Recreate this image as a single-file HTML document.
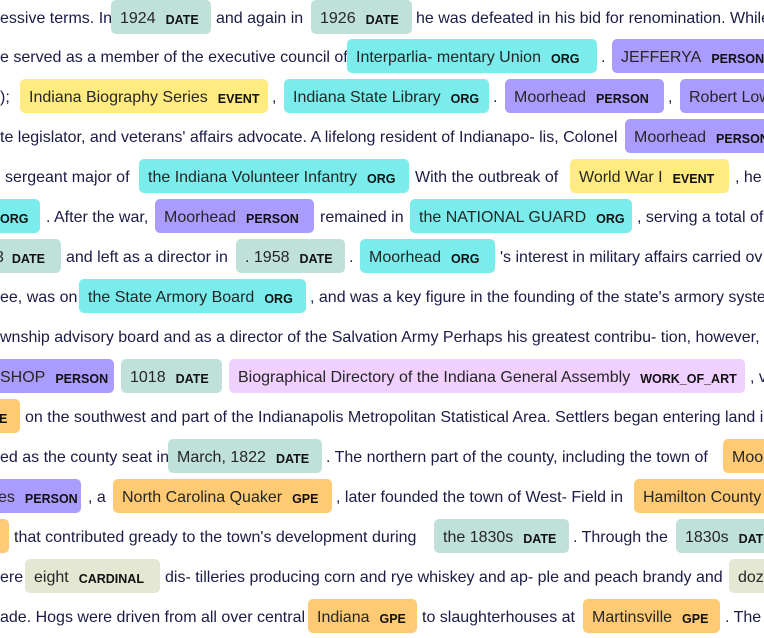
<!DOCTYPE html>
<html><head><meta charset="utf-8"><style>
html,body{margin:0;padding:0;background:#fff;width:764px;height:638px;overflow:hidden}
.r{position:absolute;left:0;width:764px;height:34px}
.r>span{position:absolute;top:0;height:34px;line-height:37px;white-space:nowrap;font-family:"Liberation Sans",sans-serif;font-size:16px;color:#1b1b45}
.e{border-radius:5px;box-sizing:border-box;padding-left:9px;overflow:hidden;color:#262626 !important}
.e b{font-size:12.5px;font-weight:bold;margin-left:10px;color:#111;position:relative;top:1px}
.DATE{background:#bfe1d9}.ORG{background:#7aecec}.PERSON{background:#aa9cfc}.EVENT{background:#ffeb80}
.GPE{background:#feca74}.WOA{background:#f0d0ff}.CARD{background:#e4e7d2}
</style></head><body>
<div class="r" style="top:0">
<span style="left:0">essive terms. In</span>
<span class="e DATE" style="left:111px;width:100px">1924<b>DATE</b></span>
<span style="left:216px">and again in</span>
<span class="e DATE" style="left:311px;width:101px">1926<b>DATE</b></span>
<span style="left:416px">he was defeated in his bid for renomination. While</span>
</div>
<div class="r" style="top:39px">
<span style="left:0">e served as a member of the executive council of</span>
<span class="e ORG" style="left:347px;width:250px">Interparlia- mentary Union<b>ORG</b></span>
<span style="left:601px">.</span>
<span class="e PERSON" style="left:612px;width:160px">JEFFERYA<b>PERSON</b></span>
</div>
<div class="r" style="top:79px">
<span style="left:0">);</span>
<span class="e EVENT" style="left:20px;width:248px">Indiana Biography Series<b>EVENT</b></span>
<span style="left:272px">,</span>
<span class="e ORG" style="left:284px;width:205px">Indiana State Library<b>ORG</b></span>
<span style="left:493px">.</span>
<span class="e PERSON" style="left:505px;width:159px">Moorhead<b>PERSON</b></span>
<span style="left:668px">,</span>
<span class="e PERSON" style="left:680px;width:100px">Robert Low</span>
</div>
<div class="r" style="top:119px">
<span style="left:0">te legislator, and veterans' affairs advocate. A lifelong resident of Indianapo- lis, Colonel</span>
<span class="e PERSON" style="left:625px;width:160px">Moorhead<b>PERSON</b></span>
</div>
<div class="r" style="top:159px">
<span style="left:5px">sergeant major of</span>
<span class="e ORG" style="left:139px;width:270px">the Indiana Volunteer Infantry<b>ORG</b></span>
<span style="left:415px">With the outbreak of</span>
<span class="e EVENT" style="left:570px;width:159px">World War I<b>EVENT</b></span>
<span style="left:735px">, he r</span>
</div>
<div class="r" style="top:199px">
<span class="e ORG" style="left:-10px;width:50px;padding-left:0"><b>ORG</b></span>
<span style="left:46px">. After the war,</span>
<span class="e PERSON" style="left:155px;width:159px">Moorhead<b>PERSON</b></span>
<span style="left:320px">remained in</span>
<span class="e ORG" style="left:410px;width:222px">the NATIONAL GUARD<b>ORG</b></span>
<span style="left:637px">, serving a total of</span>
</div>
<div class="r" style="top:239px">
<span class="e DATE" style="left:-20px;width:81px;padding-left:15px">3<b style="margin-left:8px">DATE</b></span>
<span style="left:66px">and left as a director in</span>
<span class="e DATE" style="left:236px;width:109px">. 1958<b>DATE</b></span>
<span style="left:349px">.</span>
<span class="e ORG" style="left:360px;width:135px">Moorhead<b>ORG</b></span>
<span style="left:500px">'s interest in military affairs carried ov</span>
</div>
<div class="r" style="top:279px">
<span style="left:0">ee, was on</span>
<span class="e ORG" style="left:79px;width:227px">the State Armory Board<b>ORG</b></span>
<span style="left:310px">, and was a key figure in the founding of the state's armory syste</span>
</div>
<div class="r" style="top:319px">
<span style="left:0">wnship advisory board and as a director of the Salvation Army Perhaps his greatest contribu- tion, however, w</span>
</div>
<div class="r" style="top:359px">
<span class="e PERSON" style="left:-20px;width:134px;padding-left:20px">SHOP<b>PERSON</b></span>
<span class="e DATE" style="left:121px;width:101px">1018<b>DATE</b></span>
<span class="e WOA" style="left:229px;width:516px">Biographical Directory of the Indiana General Assembly<b>WORK_OF_ART</b></span>
<span style="left:750px">, v</span>
</div>
<div class="r" style="top:399px">
<span class="e GPE" style="left:-20px;width:40px;padding-left:19px"><b style="margin-left:0">E</b></span>
<span style="left:25px">on the southwest and part of the Indianapolis Metropolitan Statistical Area. Settlers began entering land i</span>
</div>
<div class="r" style="top:439px">
<span style="left:0">ed as the county seat in</span>
<span class="e DATE" style="left:168px;width:154px">March, 1822<b>DATE</b></span>
<span style="left:326px">. The northern part of the county, including the town of</span>
<span class="e GPE" style="left:723px;width:60px">Moo</span>
</div>
<div class="r" style="top:479px">
<span class="e PERSON" style="left:-20px;width:101px;padding-left:18px">es<b>PERSON</b></span>
<span style="left:88px">, a</span>
<span class="e GPE" style="left:113px;width:219px">North Carolina Quaker<b>GPE</b></span>
<span style="left:336px">, later founded the town of West- Field in</span>
<span class="e GPE" style="left:634px;width:140px">Hamilton County</span>
</div>
<div class="r" style="top:519px">
<span class="e GPE" style="left:-20px;width:29px"></span>
<span style="left:14px">that contributed gready to the town's development during</span>
<span class="e DATE" style="left:434px;width:135px">the 1830s<b>DATE</b></span>
<span style="left:573px">. Through the</span>
<span class="e DATE" style="left:676px;width:100px">1830s<b>DATE</b></span>
</div>
<div class="r" style="top:559px">
<span style="left:0">ere</span>
<span class="e CARD" style="left:25px;width:135px">eight<b>CARDINAL</b></span>
<span style="left:165px">dis- tilleries producing corn and rye whiskey and ap- ple and peach brandy and</span>
<span class="e CARD" style="left:729px;width:60px">doz</span>
</div>
<div class="r" style="top:599px">
<span style="left:0">ade. Hogs were driven from all over central</span>
<span class="e GPE" style="left:308px;width:109px">Indiana<b>GPE</b></span>
<span style="left:422px">to slaughterhouses at</span>
<span class="e GPE" style="left:583px;width:137px">Martinsville<b>GPE</b></span>
<span style="left:725px">. The</span>
</div>
</body></html>
